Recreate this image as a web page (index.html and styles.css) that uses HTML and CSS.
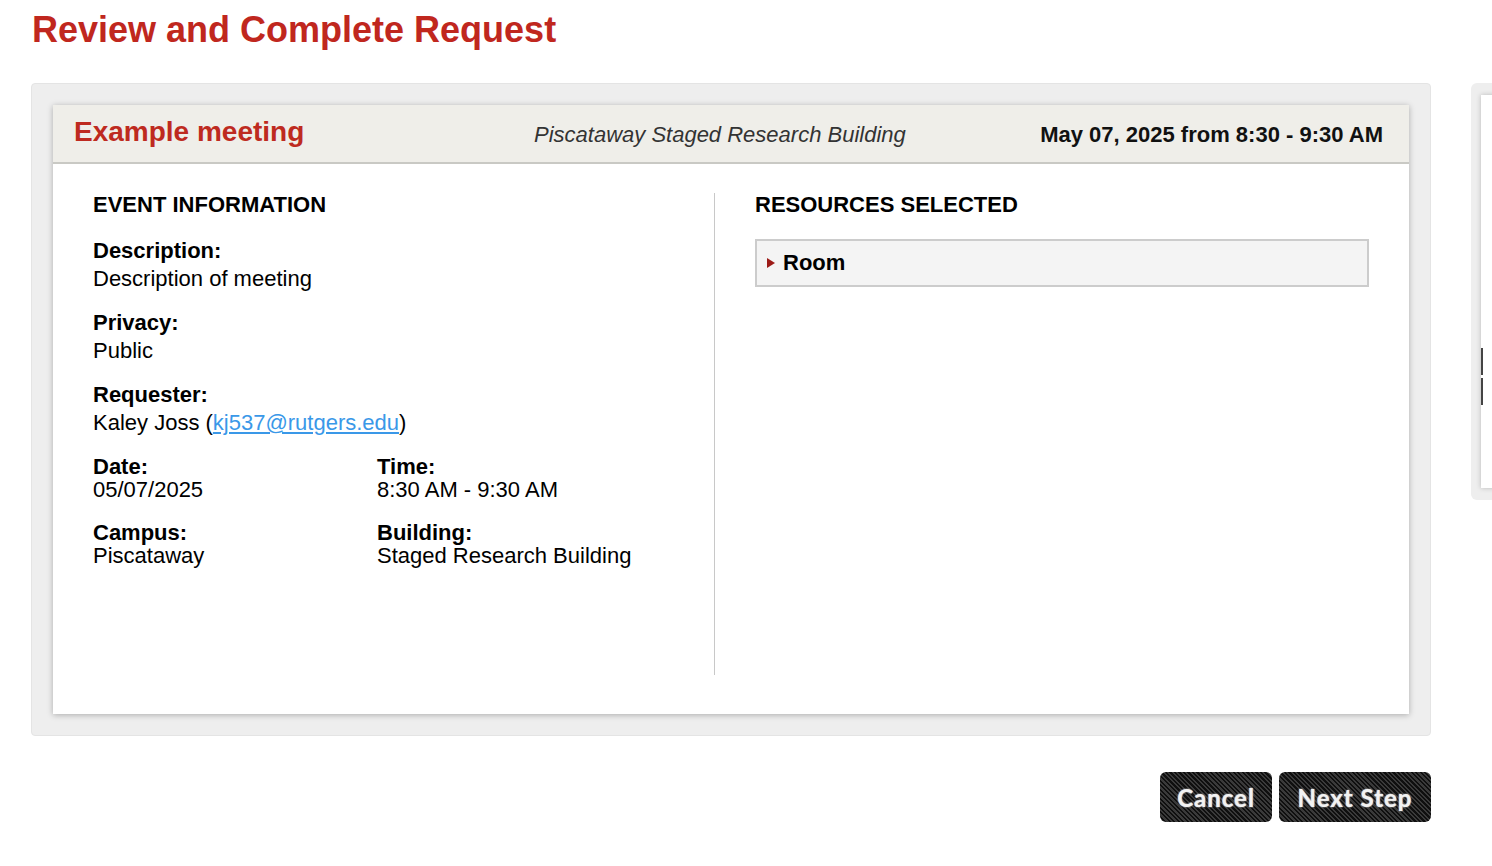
FILE: index.html
```html
<!DOCTYPE html>
<html lang="en">
<head>
<meta charset="utf-8">
<title>Review and Complete Request</title>
<link rel="stylesheet" href="styles.css">
</head>
<body>
<div class="page">
  <h1 class="page-title">Review and Complete Request</h1>
  <div class="layout">
    <div class="main">
      <section class="panel">
        <div class="card">
          <header class="card-head">
            <h2 class="event-name">Example meeting</h2>
            <span class="event-place">Piscataway Staged Research Building</span>
            <span class="event-when">May 07, 2025 from 8:30 - 9:30 AM</span>
          </header>
          <div class="card-body">
            <div class="col col-info">
              <h3 class="section-title">EVENT INFORMATION</h3>
              <div class="field">
                <div class="label">Description:</div>
                <div class="value">Description of meeting</div>
              </div>
              <div class="field">
                <div class="label">Privacy:</div>
                <div class="value">Public</div>
              </div>
              <div class="field field-last">
                <div class="label">Requester:</div>
                <div class="value">Kaley Joss (<a class="mail" href="#">kj537@rutgers.edu</a>)</div>
              </div>
              <div class="field-grid">
                <div class="cell">
                  <div class="label">Date:</div>
                  <div class="value">05/07/2025</div>
                </div>
                <div class="cell">
                  <div class="label">Time:</div>
                  <div class="value">8:30 AM - 9:30 AM</div>
                </div>
                <div class="cell">
                  <div class="label">Campus:</div>
                  <div class="value">Piscataway</div>
                </div>
                <div class="cell">
                  <div class="label">Building:</div>
                  <div class="value">Staged Research Building</div>
                </div>
              </div>
            </div>
            <div class="col col-res">
              <h3 class="section-title">RESOURCES SELECTED</h3>
              <div class="resource"><span class="tri"></span><span class="resource-name">Room</span></div>
            </div>
          </div>
        </div>
      </section>
      <div class="actions">
        <button class="btn btn-cancel" type="button">Cancel</button>
        <button class="btn btn-next" type="button">Next Step</button>
      </div>
    </div>
    <aside class="side">
      <div class="side-card">
        <div class="side-mark"></div>
        <div class="side-mark"></div>
      </div>
    </aside>
  </div>
</div>
</body>
</html>
```
FILE: styles.css
```css
html, body {
  margin: 0;
  padding: 0;
  background: #ffffff;
  overflow: hidden;
}

body {
  font-family: "Liberation Sans", Arial, Helvetica, sans-serif;
  color: #000;
}

.page {
  padding-left: 31px;
}

.page-title {
  margin: 0 0 32px 1px;
  padding-top: 9px;
  font-size: 36px;
  line-height: normal;
  font-weight: bold;
  color: #c0271e;
}

.layout {
  display: flex;
  align-items: flex-start;
}

.main {
  flex: 0 0 1400px;
  width: 1400px;
}

.panel {
  box-sizing: border-box;
  width: 1400px;
  background: #eeeeee;
  border: 1px solid #e4e4e4;
  border-radius: 4px;
  padding: 21px;
}

.card {
  background: #ffffff;
  box-shadow: 0 1px 6px rgba(0, 0, 0, 0.28);
}

.card-head {
  box-sizing: border-box;
  height: 59px;
  display: flex;
  align-items: baseline;
  padding: 10px 26px 0 21px;
  background: #efeee9;
  border-bottom: 2px solid #c9c9c4;
}

.event-name {
  flex: 0 0 460px;
  margin: 0;
  font-size: 28px;
  line-height: 34px;
  font-weight: bold;
  color: #be2a20;
}

.event-place {
  font-size: 22px;
  line-height: 34px;
  font-style: italic;
  color: #333333;
  position: relative;
  top: 1px;
}

.event-when {
  margin-left: auto;
  font-size: 22px;
  line-height: 34px;
  font-weight: bold;
  color: #111111;
  position: relative;
  top: 1px;
}

.card-body {
  display: flex;
  padding: 29px 40px 39px 40px;
}

.col {
  min-height: 482px;
}

.col-info {
  box-sizing: border-box;
  flex: 0 0 622px;
  border-right: 1px solid #c8c8c8;
}

.col-res {
  flex: 1 1 auto;
  padding-left: 40px;
}

.section-title {
  margin: 0 0 20px 0;
  font-size: 22px;
  line-height: 24px;
  font-weight: bold;
}

.col-res .section-title {
  margin-bottom: 22px;
}

.field {
  font-size: 22px;
  line-height: 28px;
  margin-bottom: 16px;
}

.field-last {
  margin-bottom: 18px;
}

.label {
  font-weight: bold;
}

.mail {
  color: #3a98e8;
  text-decoration: underline;
}

.field-grid {
  display: grid;
  grid-template-columns: 284px 1fr;
  row-gap: 20px;
  font-size: 22px;
  line-height: 23px;
}

.resource {
  box-sizing: border-box;
  height: 48px;
  display: flex;
  align-items: center;
  gap: 8px;
  padding-left: 10px;
  background: #f4f4f4;
  border: 2px solid #cccccc;
}

.tri {
  width: 0;
  height: 0;
  border-top: 5px solid transparent;
  border-bottom: 5px solid transparent;
  border-left: 8px solid #9c1b17;
}

.resource-name {
  font-size: 22px;
  font-weight: bold;
}

.actions {
  display: flex;
  justify-content: flex-end;
  gap: 7px;
  margin-top: 36px;
}

.btn {
  height: 50px;
  border: none;
  border-radius: 6px;
  padding: 0;
  background-color: #151515;
  background-image: repeating-linear-gradient(45deg, #0f0f0f 0, #0f0f0f 1.6px, #3a3a3a 1.6px, #3a3a3a 3.2px);
  color: #f2f2f2;
  font-family: Lato, "Open Sans", sans-serif;
  font-weight: bold;
  font-size: 24px;
  letter-spacing: 1px;
  text-shadow: 0 0 2px #9a9a9a, 0 0 1px #ffffff;
  cursor: pointer;
}

.btn-cancel {
  width: 112px;
}

.btn-next {
  width: 152px;
}

.side {
  flex: 0 0 300px;
  box-sizing: border-box;
  height: 417px;
  margin-left: 40px;
  padding: 12px 0 12px 10px;
  background: #eeeeee;
  border-radius: 6px;
}

.side-card {
  height: 100%;
  background: #ffffff;
  box-shadow: 0 0 5px rgba(0, 0, 0, 0.22);
  padding-top: 253px;
  box-sizing: border-box;
}

.side-mark {
  width: 2px;
  height: 27px;
  margin-bottom: 3px;
  background: #444444;
}
```
